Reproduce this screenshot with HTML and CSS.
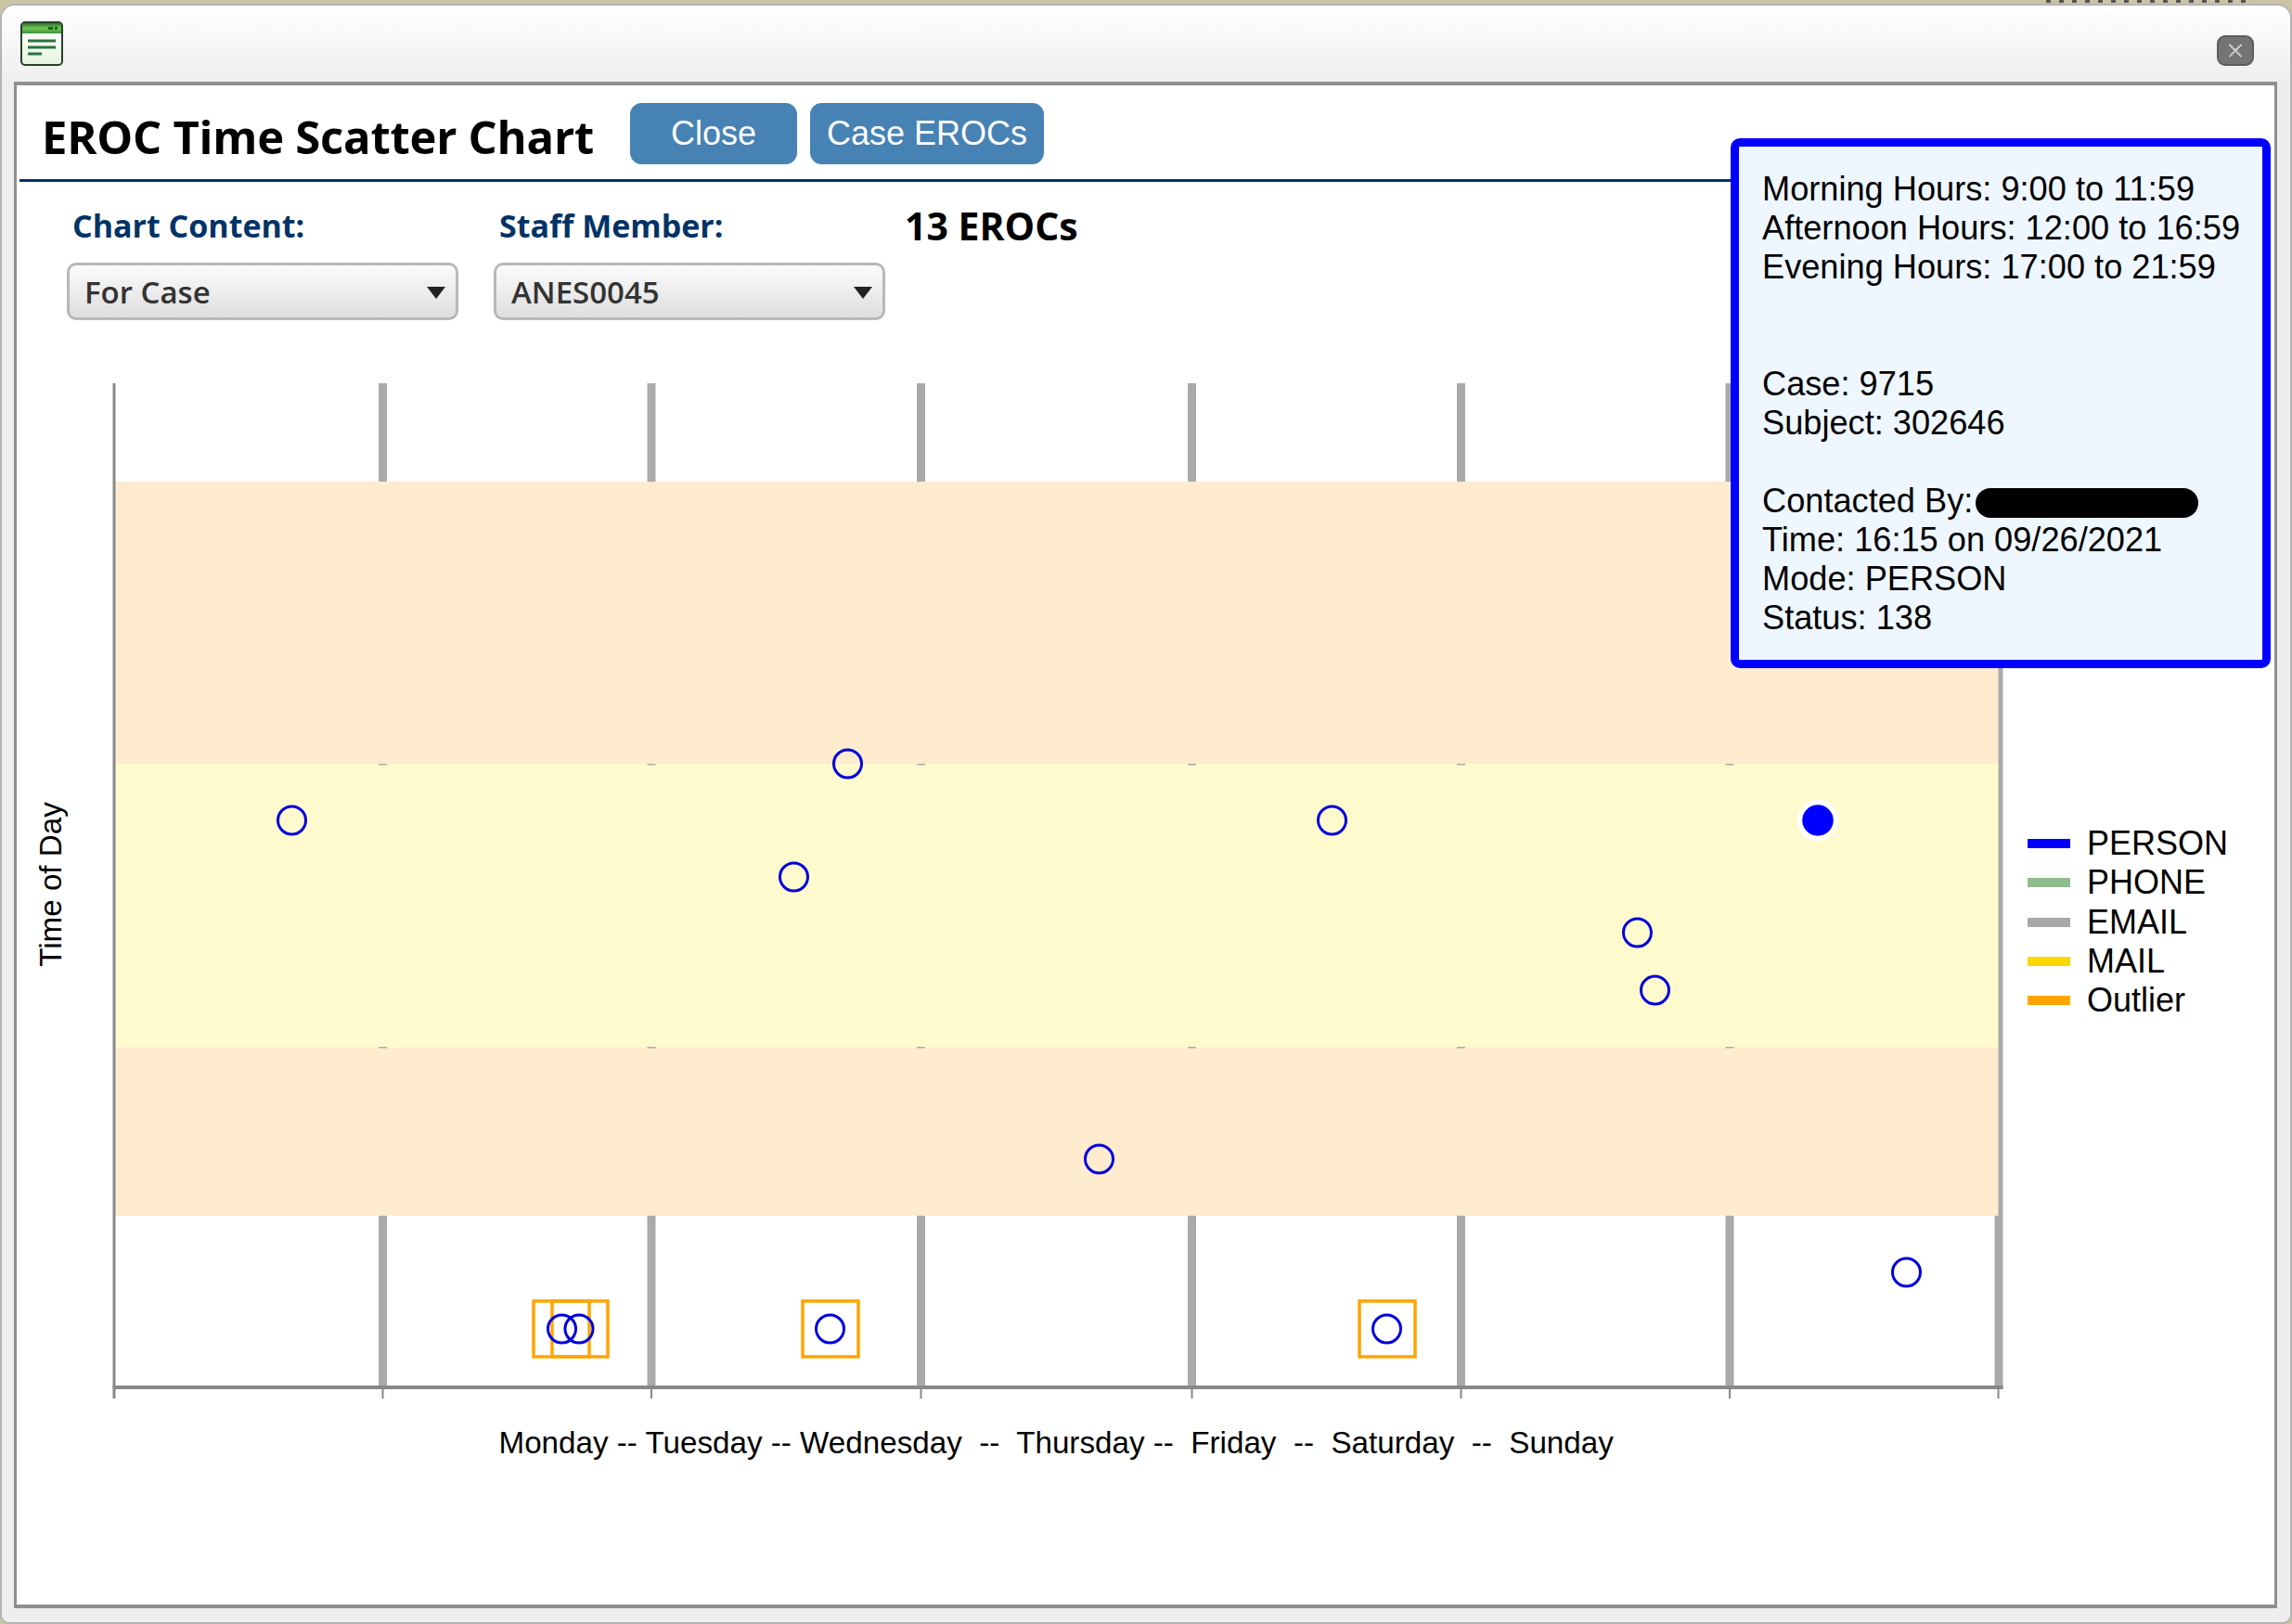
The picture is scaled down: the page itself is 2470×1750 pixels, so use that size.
FILE: index.html
```html
<!DOCTYPE html>
<html lang="en">
<head>
    <meta charset="UTF-8">
    <title>EROC Time Scatter Chart</title>
    <link rel="stylesheet" href="styles.css">
</head>
<body>
    <div class="backdrop-strip"></div>
    <div class="window">
        <div class="titlebar">
            <svg class="window-icon" viewBox="0 0 46 48">
                <defs>
                    <linearGradient id="iconHead" x1="0" y1="0" x2="0" y2="1">
                        <stop offset="0" stop-color="#2a7430"/>
                        <stop offset="0.5" stop-color="#74c556"/>
                        <stop offset="1" stop-color="#3a943c"/>
                    </linearGradient>
                    <linearGradient id="iconBody" x1="0" y1="0" x2="0" y2="1">
                        <stop offset="0" stop-color="#ffffff"/>
                        <stop offset="1" stop-color="#e6f3de"/>
                    </linearGradient>
                </defs>
                <rect x="1" y="1" width="44" height="46" rx="4" fill="url(#iconBody)" stroke="#26402a" stroke-width="2"/>
                <rect x="2" y="2" width="42" height="11" fill="url(#iconHead)"/>
                <rect x="30" y="6" width="5" height="3" fill="#1f5f27"/>
                <rect x="37" y="6" width="3" height="3" fill="#1f5f27"/>
                <path d="M8 21H38M8 28H38M8 35H23" stroke="#2b7045" stroke-width="3" fill="none"/>
            </svg>
            <button class="window-close" type="button" aria-label="Close window">
                <svg viewBox="0 0 20 20"><path d="M2 2L18 18M18 2L2 18" stroke="#e8e8e8" stroke-width="2.5" stroke-dasharray="2.5 1" fill="none"/></svg>
            </button>
        </div>

        <div class="panel">
            <div class="page-header">
                <h1 class="page-title">EROC Time Scatter Chart</h1>
                <button class="btn btn-close" type="button">Close</button>
                <button class="btn" type="button">Case EROCs</button>
            </div>

            <div class="filters">
                <div class="filter">
                    <div class="filter-label">Chart Content:</div>
                    <div class="select-box"><span>For Case</span><i class="select-arrow"></i></div>
                </div>
                <div class="filter">
                    <div class="filter-label">Staff Member:</div>
                    <div class="select-box"><span>ANES0045</span><i class="select-arrow"></i></div>
                </div>
                <div class="count">13 EROCs</div>
            </div>

            <div class="chart-row">
                <!-- viewBox is in page coordinates so points read straight off the screenshot -->
                <svg class="chart" viewBox="17.5 400 2150 1180">
                    <g class="grid">
                        <rect x="407.5" y="413" width="9" height="1080"/>
                        <rect x="697" y="413" width="9" height="1080"/>
                        <rect x="987.5" y="413" width="9" height="1080"/>
                        <rect x="1279.5" y="413" width="9" height="1080"/>
                        <rect x="1569.5" y="413" width="9" height="1080"/>
                        <rect x="1859" y="413" width="9" height="1080"/>
                        <rect x="2149" y="413" width="9" height="1084"/>
                    </g>
                    <rect class="band-peach" x="124" y="519" width="2029" height="304"/>
                    <rect class="band-yellow" x="124" y="823" width="2029" height="306"/>
                    <rect class="band-peach" x="124" y="1129" width="2029" height="181"/>
                    <g class="band-marks">
                        <rect x="407.5" y="823" width="9" height="1.5"/>
                        <rect x="697" y="823" width="9" height="1.5"/>
                        <rect x="987.5" y="823" width="9" height="1.5"/>
                        <rect x="1279.5" y="823" width="9" height="1.5"/>
                        <rect x="1569.5" y="823" width="9" height="1.5"/>
                        <rect x="1859" y="823" width="9" height="1.5"/>
                        <rect x="407.5" y="1128" width="9" height="1.5"/>
                        <rect x="697" y="1128" width="9" height="1.5"/>
                        <rect x="987.5" y="1128" width="9" height="1.5"/>
                        <rect x="1279.5" y="1128" width="9" height="1.5"/>
                        <rect x="1569.5" y="1128" width="9" height="1.5"/>
                        <rect x="1859" y="1128" width="9" height="1.5"/>
                    </g>
                    <g class="axis">
                        <rect x="121" y="413" width="3" height="1094"/>
                        <rect x="121" y="1493" width="2037" height="4"/>
                        <rect x="411" y="1497" width="2" height="10"/>
                        <rect x="700.5" y="1497" width="2" height="10"/>
                        <rect x="991" y="1497" width="2" height="10"/>
                        <rect x="1283" y="1497" width="2" height="10"/>
                        <rect x="1573" y="1497" width="2" height="10"/>
                        <rect x="1862.5" y="1497" width="2" height="10"/>
                        <rect x="2152" y="1497" width="2" height="10"/>
                    </g>
                    <g class="outliers">
                        <rect x="574.5" y="1402" width="60" height="60"/>
                        <rect x="594.5" y="1402" width="60" height="60"/>
                        <rect x="864.5" y="1402" width="60" height="60"/>
                        <rect x="1464.5" y="1402" width="60" height="60"/>
                    </g>
                    <g class="points">
                        <circle cx="314" cy="884" r="15"/>
                        <circle cx="913" cy="823" r="15"/>
                        <circle cx="855" cy="945" r="15"/>
                        <circle cx="1435" cy="884" r="15"/>
                        <circle cx="1764" cy="1005" r="15"/>
                        <circle cx="1783" cy="1067" r="15"/>
                        <circle cx="1184" cy="1249" r="15"/>
                        <circle cx="2054" cy="1371" r="15"/>
                        <circle cx="605" cy="1432" r="15"/>
                        <circle cx="623.5" cy="1432" r="15"/>
                        <circle cx="894" cy="1432" r="15"/>
                        <circle cx="1494" cy="1432" r="15"/>
                    </g>
                    <circle class="point-active" cx="1958.5" cy="884" r="19.5"/>
                    <text class="chart-text" transform="translate(65 953) rotate(-90)" text-anchor="middle">Time of Day</text>
                    <text class="chart-text" x="537" y="1566" xml:space="preserve">Monday -- Tuesday -- Wednesday  --  Thursday --  Friday  --  Saturday  --  Sunday</text>
                </svg>

                <ul class="legend">
                    <li class="legend-item"><i class="swatch swatch-person"></i>PERSON</li>
                    <li class="legend-item"><i class="swatch swatch-phone"></i>PHONE</li>
                    <li class="legend-item"><i class="swatch swatch-email"></i>EMAIL</li>
                    <li class="legend-item"><i class="swatch swatch-mail"></i>MAIL</li>
                    <li class="legend-item"><i class="swatch swatch-outlier"></i>Outlier</li>
                </ul>
            </div>

            <div class="tooltip">
                Morning Hours: 9:00 to 11:59<br>
                Afternoon Hours: 12:00 to 16:59<br>
                Evening Hours: 17:00 to 21:59<br>
                <br>
                <br>
                Case: 9715<br>
                Subject: 302646<br>
                <br>
                Contacted By:<span class="redacted"></span><br>
                Time: 16:15 on 09/26/2021<br>
                Mode: PERSON<br>
                Status: 138
            </div>
        </div>
    </div>
</body>
</html>
```

FILE: styles.css
```css
* {
    margin: 0;
    padding: 0;
    box-sizing: border-box;
}

body {
    position: relative;
    width: 2470px;
    height: 1750px;
    overflow: hidden;
    padding-top: 4px;
    background-color: #c9c5a4;
    font-family: 'Liberation Sans', Arial, sans-serif;
}

/* Bit of the page behind the dialog, cut off at the top edge */
.backdrop-strip {
    position: absolute;
    top: 0;
    left: 2205px;
    width: 215px;
    height: 3px;
    background: repeating-linear-gradient(90deg, #555555 0 5px, transparent 5px 14px);
}

.window {
    display: flex;
    flex-direction: column;
    height: 1746px;
    background-color: #eeeeee;
    border: 2px solid #b4b4b4;
    border-radius: 16px 16px 10px 10px;
}

.titlebar {
    display: flex;
    justify-content: space-between;
    align-items: flex-start;
    height: 82px;
    padding: 17px 39px 0 20px;
    background: linear-gradient(#ffffff, #eeeeee);
    border-radius: 14px 14px 0 0;
}

.window-icon {
    width: 46px;
    height: 48px;
}

.window-close {
    width: 40px;
    height: 33px;
    margin-top: 15px;
    padding: 5px 10px;
    background-color: #747474;
    border: 2px solid #5c5c5c;
    border-radius: 9px;
}

.window-close svg {
    display: block;
    width: 100%;
    height: 100%;
}

.panel {
    position: relative;
    flex: 1;
    margin: 0 14px 15px 13px;
    background-color: white;
    border: 3px solid #8f8f8f;
    border-width: 4px 3px 4px 3px;
}

/* Header */
.page-header {
    display: flex;
    align-items: flex-start;
    height: 104px;
    margin: 0 6px 0 3px;
    padding: 19px 0 0 24px;
    border-bottom: 3px solid #003366;
}

.page-title {
    width: 634px;
    margin-top: 2px;
    font-family: 'Open Sans', sans-serif;
    font-size: 49px;
    font-weight: 700;
    letter-spacing: -0.25px;
    line-height: 68px;
    color: black;
}

.btn {
    height: 66px;
    padding: 0 17px;
    margin-right: 14px;
    background-color: #4682b4;
    border: 1px solid #4682b4;
    border-radius: 12px;
    font-family: 'Liberation Sans', Arial, sans-serif;
    font-size: 36px;
    color: white;
}

.btn-close {
    width: 180px;
    padding: 0;
}

/* Filters */
.filters {
    display: flex;
    align-items: flex-start;
    gap: 38px;
    padding: 24px 0 0 54px;
}

.filter {
    display: flex;
    flex-direction: column;
    gap: 17px;
    width: 422px;
}

.filter-label {
    padding-left: 6px;
    font-family: 'Open Sans', sans-serif;
    font-size: 34px;
    font-weight: 700;
    line-height: 46px;
    color: #003366;
}

.select-box {
    display: flex;
    justify-content: space-between;
    align-items: center;
    height: 62px;
    padding: 1px 11px 0 16px;
    background: linear-gradient(#fbfbfb, #dedede);
    border: 3px solid #b8b8b8;
    border-radius: 10px;
    font-family: 'Open Sans', sans-serif;
    font-size: 33px;
    font-weight: 600;
    color: #333333;
}

.select-arrow {
    width: 0;
    height: 0;
    margin-top: 2px;
    border-left: 10.5px solid transparent;
    border-right: 10.5px solid transparent;
    border-top: 13px solid #222222;
}

.count {
    margin-left: -17px;
    font-family: 'Open Sans', sans-serif;
    font-size: 41px;
    font-weight: 700;
    line-height: 46px;
    color: black;
}

/* Chart */
.chart-row {
    display: flex;
    margin-top: 55px;
}

.chart {
    flex: none;
    width: 2150px;
    height: 1180px;
}

.grid rect,
.band-marks rect {
    fill: #aaaaaa;
}

.axis rect {
    fill: #888888;
}

.band-peach {
    fill: #ffebcd;
}

.band-yellow {
    fill: #fffacd;
}

.outliers rect {
    fill: none;
    stroke: #ffa500;
    stroke-width: 3.5;
}

.points circle {
    fill: none;
    stroke: #0000dd;
    stroke-width: 3;
}

.point-active {
    fill: #0000ff;
    stroke: white;
    stroke-width: 5.5;
}

.chart-text {
    font-family: 'Liberation Sans', Arial, sans-serif;
    font-size: 33.2px;
    fill: black;
    white-space: pre;
}

.legend {
    list-style: none;
    margin: 488px 0 0 17px;
}

.legend-item {
    display: flex;
    align-items: center;
    gap: 18px;
    height: 42.3px;
    font-size: 36px;
    color: black;
}

.swatch {
    width: 46px;
    height: 10px;
}

.swatch-person { background-color: #0000ff; }
.swatch-phone { background-color: #8fbc8f; }
.swatch-email { background-color: #a9a9a9; }
.swatch-mail { background-color: #ffd700; }
.swatch-outlier { background-color: #ffa500; }

/* Hover box over the chart */
.tooltip {
    position: absolute;
    top: 57px;
    right: 4px;
    width: 582px;
    padding: 25px 18px 24px 25px;
    background-color: #eef6ff;
    border: 9px solid #0000ff;
    border-radius: 10px;
    font-size: 36.2px;
    line-height: 42px;
    color: black;
}

.redacted {
    display: inline-block;
    width: 240px;
    height: 32px;
    margin-left: 3px;
    vertical-align: -6px;
    background-color: black;
    border-radius: 16px;
}
```
